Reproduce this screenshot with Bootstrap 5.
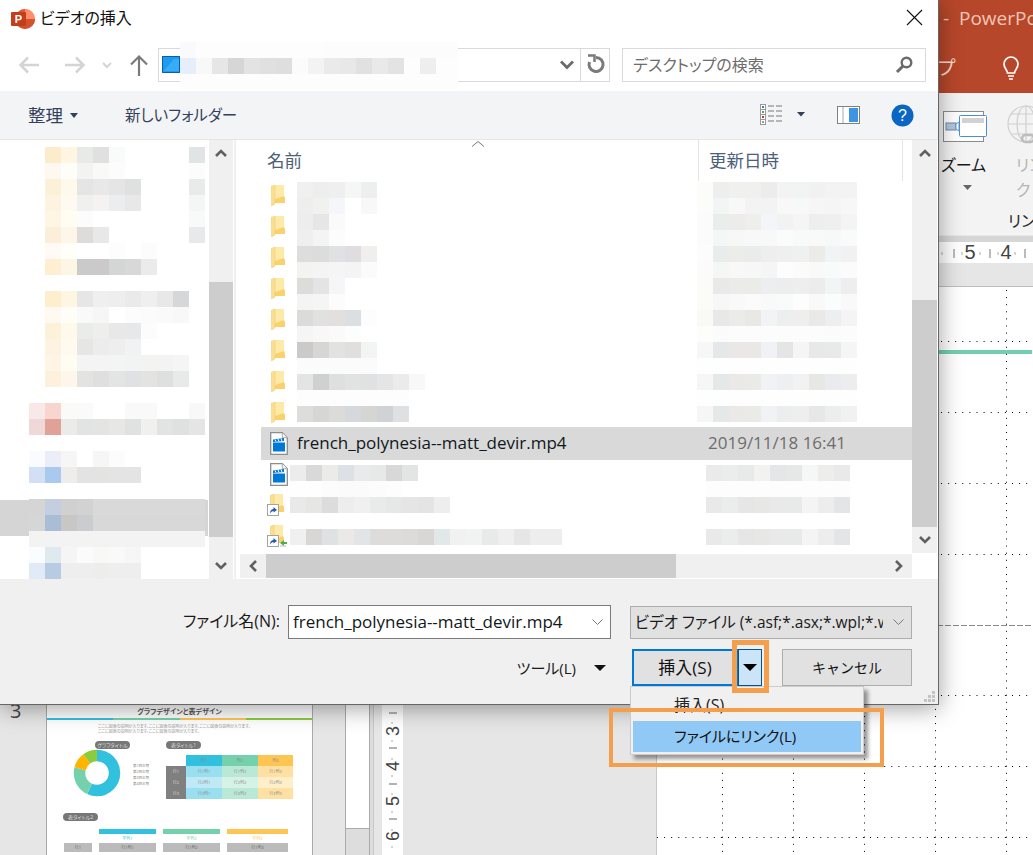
<!DOCTYPE html>
<html lang="ja">
<head>
    <meta charset="UTF-8">
    <meta name="viewport" content="width=device-width, initial-scale=1.0">
    <title>ビデオの挿入</title>
    <link rel="stylesheet" href="https://cdn.jsdelivr.net/npm/bootstrap@5.3.2/dist/css/bootstrap.min.css">
    <style>
        html, body { height: 100%; }
        body {
            width: 1033px; height: 855px; overflow: hidden; position: relative; background: #fff;
            font-family: "Open Sans", "Noto Sans CJK JP", sans-serif;
            font-feature-settings: "palt"; font-size: 16px; color: #1a1a1a; line-height: 1.2;
        }
        /* powerpoint behind the dialog */
        .pp-app { position: absolute; inset: 0; display: flex; flex-direction: column; }
        .pp-title { height: 93px; background: #b7472a; flex: none; position: relative; }
        .pp-title-text { position: absolute; left: 943px; top: 7px; color: #f2c6b7; font-size: 19px; white-space: nowrap; font-family: "Open Sans", sans-serif; }
        .pp-tab { position: absolute; left: 938px; top: 57px; color: #f7dcd3; font-size: 19px; }
        .pp-bulb { position: absolute; left: 1001px; top: 56px; }
        .pp-ribbon { height: 142px; background: #f3f3f3; flex: none; position: relative; font-size: 16px; }
        .rb-zoom-icon { position: absolute; left: 942px; top: 17px; }
        .rb-globe { position: absolute; left: 1006px; top: 12px; }
        .rb-zoom { position: absolute; left: 941px; top: 63px; }
        .rb-caret { position: absolute; left: 963px; top: 92px; }
        .rb-link { position: absolute; left: 1016px; top: 60px; color: #b5b5b5; line-height: 25px; white-space: nowrap; }
        .rb-group { position: absolute; left: 1008px; top: 119px; color: #262626; white-space: nowrap; }
        .pp-rulerline { height: 7px; background: #d6d6d6; border-top: 1px solid #e8e8e8; flex: none; }
        .pp-ruler { height: 21px; background: #fff; flex: none; }
        .pp-band { height: 24px; background: #e6e6e6; border-bottom: 1px solid #bdbdbd; flex: none; }
        .pp-work { flex: 1 1 auto; display: flex; min-height: 0; }
        .pp-pane { width: 345px; flex: none; background: #e6e6e6; padding: 417px 0 0 46px; position: relative; overflow: hidden; }
        .pp-num { position: absolute; left: 10px; top: 412px; font-size: 20px; color: #444; }
        .thumb { width: 267px; height: 160px; background: #fff; border: 1px solid #aaa; overflow: hidden; padding: 1px 0 0; }
        .thumb-title { font-size: 7px; font-weight: 700; color: #555; text-align: center; height: 12px; line-height: 12px; }
        .thumb-line { display: flex; height: 2px; }
        .thumb-line i { flex: 1; }
        .thumb-note { font-size: 4px; color: #999; line-height: 5px; padding: 4px 0 0 51px; white-space: nowrap; height: 21px; }
        .thumb-chip { background: #777; color: #ddd; font-size: 5px; border-radius: 4px; height: 8px; line-height: 8px; text-align: center; width: 35px; }
        .thumb-body { display: flex; padding-left: 24px; height: 72px; }
        .thumb-chart { width: 95px; position: relative; }
        .thumb-donut { position: absolute; left: 1px; top: 7px; }
        .thumb-legend { position: absolute; left: 62px; top: 22px; font-size: 3.5px; color: #888; line-height: 6px; white-space: nowrap; }
        .thumb-tbl { display: grid; grid-template-columns: 20px 36px 36px 35px; margin-top: 6px; font-size: 4px; color: #888; text-align: center; line-height: 11px; }
        .thumb-tbl div { height: 11px; }
        .thumb-row2 { display: grid; grid-template-columns: 28px 57px 57px 61px; column-gap: 7px; padding: 8px 0 0 17px; font-size: 4px; line-height: 9px; text-align: center; color: #888; }
        .thumb-bar { height: 5px; }
        .c-a { background: #31c0de; } .c-b { background: #74d1ac; } .c-c { background: #ffc552; } .c-d { background: #8ccb3c; }
        .c-a1 { background: #9adff0; } .c-b1 { background: #b9e9d6; } .c-c1 { background: #ffe0a3; }
        .c-a2 { background: #bfeaf5; } .c-b2 { background: #d6f1e6; } .c-c2 { background: #ffefc9; }
        .c-g { background: #808080; color: #ddd; } .c-s { background: #bbb; color: #666; }
        .t-a { color: #31c0de; } .t-b { color: #74d1ac; } .t-c { color: #ffc552; }
        .pp-vsb { width: 25px; flex: none; background: #ddd; border-left: 1px solid #aaa; border-right: 1px solid #aaa; padding-top: 0; position: relative; }
        .pp-vsb-thumb { height: 542px; background: #fff; border-bottom: 1px solid #aaa; }
        .pp-gap { width: 4px; flex: none; background: #ddd; border-right: 1px solid #c8c8c8; }
        .pp-gap2 { width: 8px; flex: none; background: #e6e6e6; }
        .pp-vruler { width: 21px; flex: none; background: #fff; }
        .pp-gray { width: 254px; flex: none; background: #e6e6e6; border-right: 1px solid #c8c8c8; }
        .pp-slide { flex: 1 1 auto; background: #fff; }

        /* dialog */
        .win { position: absolute; left: 0; top: 0; width: 939px; height: 705px; background: #fff; display: flex; flex-direction: column;
            border-right: 1px solid #666; border-bottom: 1px solid #666; box-shadow: 0 3px 22px rgba(0,0,0,.38); }
        .win-title { height: 38px; flex: none; padding-left: 11px; position: relative; }
        .win-title span { margin-left: 5px; color: #111; }
        .win-close { position: absolute; left: 906px; top: 9px; }
        .addr-row { height: 53px; flex: none; padding-top: 10px; position: relative; }
        .nav-icons { width: 158px; height: 34px; flex: none; padding-left: 19px; }
        .addr-box { width: 452px; height: 34px; flex: none; border: 1px solid #d9d9d9; background: #fff; }
        .addr-blue { margin: 7px 0 0 3px; }
        .addr-chev { margin: 11px 0 0 auto; }
        .addr-refresh { width: 29px; height: 32px; border-left: 1px solid #d9d9d9; padding: 4px 0 0 5px; margin-left: 6px; }
        .search-box { width: 304px; height: 34px; flex: none; margin-left: 12px; border: 1px solid #d9d9d9; padding: 0 0 0 10px; color: #6d6d6d; line-height: 32px; }
        .search-box svg { margin: 7px 12px 0 auto; }
        .addr-blur { position: absolute; left: 180px; top: 4px; width: 278px; overflow: hidden; }
        .tool-row { height: 49px; flex: none; background: #f3f4f6; border-bottom: 1px solid #e5e5e5; color: #33415a; padding-left: 28px; }
        .tool-org { font-size: 17.5px; }
        .tool-new { margin-left: 47px; font-size: 15.5px; }
        .tool-caret { margin-left: 7px; }
        .tool-right { margin-left: auto; margin-right: 24px; }
        .tool-pane { margin: 0 31px 0 17px; }
        .main-area { height: 439px; flex: none; display: flex; overflow: hidden; }
        .tree-pane { width: 209px; flex: none; position: relative; padding: 7px 0 0 29px; overflow: hidden; }
        .tree-sel { position: absolute; left: 0; top: 360px; width: 208px; height: 36px; background: #d5d5d5; }
        .tree-pane .mos { position: relative; }
        .sb { width: 24px; flex: none; background: #f0f0f0; display: flex; flex-direction: column; }
        .sb-btn { height: 26px; flex: none; display: flex; align-items: center; justify-content: center; }
        .sb-track { flex: none; }
        .sb-thumb { background: #cdcdcd; flex: none; }
        .tr-t1 { height: 116px; } .tr-th { height: 255px; } .tr-t2 { height: 16px; }
        .ls-t1 { height: 134px; } .ls-th { height: 227px; }
        .sb-v2 { width: 25px; margin-left: 0; background: #f0f0f0; }
        .sb-corner { height: 26px; background: #fff; flex: none; }
        .pane-div { width: 7px; flex: none; background: #fff; padding-left: 1px; }
        .pane-div i { display: block; width: 2px; height: 100%; background: #efefef; }
        .list-pane { width: 672px; flex: none; display: flex; flex-direction: column; }
        .list-head { height: 42px; flex: none; color: #4c607a; position: relative; font-size: 17.5px; }
        .lh-name { position: absolute; left: 27px; top: 10px; }
        .lh-date { position: absolute; left: 458px; top: 0; width: 205px; height: 41px; border-left: 1px solid #e5e5e5; border-right: 1px solid #e5e5e5; padding: 10px 0 0 10px; }
        .lh-sort { position: absolute; left: 231px; top: 0; }
        .list-g1 { height: 245px; flex: none; display: flex; }
        .icon-col1 { width: 57px; flex: none; padding: 3px 0 0 31px; display: flex; flex-direction: column; gap: 10px; }
        .name-col1 { width: 400px; flex: none; }
        .list-sel { height: 33px; flex: none; margin-left: 21px; background: #d9d9d9; display: flex; align-items: center; padding-left: 9px; }
        .list-sel .fname { margin-left: 9px; width: 411px; font-size: 17px; color: #101820; }
        .list-sel .fdate { color: #6d6d6d; font-size: 17px; }
        .list-g2 { height: 94px; flex: none; display: flex; }
        .icon-col2 { width: 50px; flex: none; padding: 3px 0 0 27px; }
        .ico-wrap { position: relative; width: 22px; height: 22px; margin-bottom: 9px; }
        .ico-wrap .ico-main { position: absolute; left: 3px; top: 0; }
        .ico-wrap .ico-over { position: absolute; left: 0; top: 10px; }
        .ico-wrap .ico-net { position: absolute; left: 13px; top: 14px; }
        .name-col2 { width: 416px; flex: none; padding-top: 5px; }
        .date-col2 { padding-top: 5px; }
        .hsb { height: 24px; flex: none; background: #f0f0f0; display: flex; }
        .hsb-btn { width: 26px; display: flex; align-items: center; justify-content: center; flex: none; }
        .hsb-thumb { width: 410px; background: #cdcdcd; flex: none; }
        .hsb-btn.end { margin-left: auto; }
        .mos-row { display: flex; height: 16px; }
        .mos-cell { width: 16px; flex: none; }
        .win-foot { flex: 1 1 auto; background: #f0f0f0; padding: 26px 26px 0 0; position: relative; }
        .foot-row { display: flex; justify-content: flex-end; align-items: center; }
        .foot-row2 { margin-top: 10px; }
        .fname-input { width: 323px; height: 34px; border: 1px solid #7a7a7a; background: #fff; margin-left: 8px; padding: 0 7px 0 4px; font-size: 17px; color: #101820; }
        .ftype { width: 282px; height: 33px; margin-left: 19px; background: #e1e1e1; border: 1px solid #adadad; padding: 0 7px 0 4px; white-space: nowrap; overflow: hidden; font-size: 15.5px; }
        .ftype span { width: 248px; overflow: hidden; flex: none; }
        .win-btn { height: 37px; border-radius: 0; background: #e1e1e1; border: 1px solid #adadad; font-size: 15px; padding: 0; color: #111; }
        .btn-insert { width: 106px; border: 2px solid #0078d7; font-size: 17px; }
        .btn-insert:hover { background: #e1e1e1; border-color: #0078d7; }
        .btn-arrow { width: 24px; background: #cce4f7; border: 1px solid #005499; border-left-width: 1px; display: flex; align-items: center; justify-content: center; }
        .btn-cancel { width: 130px; margin-left: 20px; font-size: 14px; }
        .tool-btn { margin-right: 26px; font-size: 15px; }
        .tool-btn svg { margin-left: 18px; }
        .grip { position: absolute; right: 2px; bottom: 1px; }
        .ins-menu.dropdown-menu { display: block; position: absolute; left: 630px; top: 686px; width: 234px; height: 69px; min-width: 0; margin: 0; padding: 2px 2px; border: 1px solid #ccc; border-radius: 0;
            background: #f0f0f0; box-shadow: 4px 4px 4px rgba(0,0,0,.4); font-size: 15px; }
        .ins-menu .dropdown-item { padding: 0 0 0 41px; height: 31px; line-height: 31px; color: #111; }
        .ins-menu .first { color: #222; height: 31px; margin-top: 1px; font-size: 16px; }
        .ins-menu .dropdown-item.active { background: #90c8f6; color: #111; }
        .mark-a, .mark-b { position: absolute; border: 5px solid #f49f4d; pointer-events: none; z-index: 1001; }
        .mark-a { left: 732px; top: 640px; width: 37px; height: 53px; }
        .mark-b { left: 609px; top: 708px; width: 275px; height: 59px; border-width: 4px; }
    </style>
</head>
<body>
    <!-- PowerPoint window behind -->
    <div class="pp-app">
        <div class="pp-title">
            <div class="pp-title-text">-&nbsp;&nbsp;PowerPoint</div>
            <div class="pp-tab">プ</div>
            <svg class="pp-bulb" width="20" height="24" viewBox="0 0 20 24" fill="none" stroke="#fff" stroke-width="1.7">
                <path d="M6.500 17c0-3-3.500-4.500-3.500-9a7 7 0 0 1 14 0c0 4.500-3.500 6-3.500 9z"/><path d="M7 20h6M8 23h4"/>
            </svg>
        </div>
        <div class="pp-ribbon">
            <svg class="rb-zoom-icon" width="46" height="34" viewBox="0 0 46 34">
                <rect x="1.500" y="1.500" width="40" height="30" fill="#fff" stroke="#8c8c8c"/>
                <rect x="4" y="13" width="10" height="7" fill="#b3c6dc" stroke="#6e88a8"/>
                <path d="M14 14l3-2v9l-3-2z" fill="#fff" stroke="#5b9bd5"/>
                <rect x="17.500" y="5.500" width="27" height="21" rx="1" fill="#fff" stroke="#4a90d0"/>
                <rect x="20" y="8" width="22" height="5" fill="#d2d2d2"/>
            </svg>
            <svg class="rb-globe" width="27" height="40" viewBox="0 0 27 40" fill="none" stroke="#d0d0d0" stroke-width="1.200">
                <circle cx="20" cy="19" r="18"/><ellipse cx="20" cy="19" rx="9" ry="18"/><path d="M20 1v36M2 19h36M5 9h30M5 29h30"/>
                <rect x="16" y="30" width="12" height="7" rx="3.500" stroke="#bdbdbd" stroke-width="2.500"/>
            </svg>
            <div class="rb-zoom">ズーム</div>
            <svg class="rb-caret" width="9" height="5"><path d="M0 0h9L4.500 5z" fill="#666"/></svg>
            <div class="rb-link">リン<br>ク</div>
            <div class="rb-group">リン</div>
        </div>
        <div class="pp-rulerline"></div>
        <div class="pp-ruler">
            <svg width="1033" height="21" viewBox="0 242 1033 21">
                <g stroke="#777"><path d="M954 249v9M990 249v9M1025 249v9"/></g>
                <g stroke="#aaa"><path d="M942 252v3M962 252v3M980 252v3M998 252v3M1015 252v3"/></g>
                <text x="970" y="259" text-anchor="middle" font-size="20" fill="#444" font-family="Liberation Sans">5</text>
                <text x="1006" y="259" text-anchor="middle" font-size="20" fill="#444" font-family="Liberation Sans">4</text>
            </svg>
        </div>
        <div class="pp-band"></div>
        <div class="pp-work">
            <div class="pp-pane">
                <div class="pp-num">3</div>
                <div class="thumb">
                    <div class="thumb-title">グラフデザインと表デザイン</div>
                    <div class="thumb-line"><i class="c-a"></i><i class="c-b"></i><i class="c-c"></i><i class="c-d"></i></div>
                    <div class="thumb-note">ここに図表の説明が入ります。ここに図表の説明が入ります。ここに図表の説明が入ります。<br>ここに図表の説明が入ります。ここに図表の説明が入ります。</div>
                    <div class="thumb-body">
                        <div class="thumb-chart">
                            <div class="thumb-chip ms-4">グラフタイトル</div>
                            <svg class="thumb-donut" width="50" height="50" viewBox="0 0 50 50" fill="none" stroke-width="11.500">
                                <g transform="rotate(-90 25 25)">
                                    <circle cx="25" cy="25" r="17.500" stroke="#31c0de" pathLength="100" stroke-dasharray="57 43"/>
                                    <circle cx="25" cy="25" r="17.500" stroke="#74d1ac" pathLength="100" stroke-dasharray="22 78" stroke-dashoffset="-57"/>
                                    <circle cx="25" cy="25" r="17.500" stroke="#ffb400" pathLength="100" stroke-dasharray="11 89" stroke-dashoffset="-79"/>
                                    <circle cx="25" cy="25" r="17.500" stroke="#8ccb3c" pathLength="100" stroke-dasharray="10 90" stroke-dashoffset="-90"/>
                                </g>
                            </svg>
                            <div class="thumb-legend">第1四半期<br>第2四半期<br>第3四半期<br>第4四半期</div>
                        </div>
                        <div>
                            <div class="thumb-chip">表タイトル1</div>
                            <div class="thumb-tbl">
                                <div></div><div class="c-a">列1</div><div class="c-b">列2</div><div class="c-c">列3</div>
                                <div class="c-g">行1</div><div class="c-a1">行1列1</div><div class="c-b1">行1列2</div><div class="c-c1">行1列3</div>
                                <div class="c-g">行2</div><div class="c-a2">行2列1</div><div class="c-b2">行2列2</div><div class="c-c2">行2列3</div>
                                <div class="c-g">行3</div><div class="c-a1">行3列1</div><div class="c-b1">行3列2</div><div class="c-c1">行3列3</div>
                            </div>
                        </div>
                    </div>
                    <div class="thumb-chip ms-3">表タイトル2</div>
                    <div class="thumb-row2">
                        <div></div><div class="c-a thumb-bar"></div><div class="c-b thumb-bar"></div><div class="c-c thumb-bar"></div>
                        <div></div><div class="t-a">平列1</div><div class="t-b">平列2</div><div class="t-c">平列3</div>
                        <div class="c-s">行1</div><div class="c-s">行1列1</div><div class="c-s">行1列2</div><div class="c-s">行1列3</div>
                    </div>
                </div>
            </div>
            <div class="pp-vsb"><div class="pp-vsb-thumb"></div></div>
            <div class="pp-gap"></div>
            <div class="pp-gap2"></div>
            <div class="pp-vruler">
                <svg width="21" height="568" viewBox="382 287 21 568">
                    <g stroke="#666"><path d="M389 713h8M389 748h8M389 784h8M389 819h8"/></g>
                    <g stroke="#aaa"><path d="M392 696v2M392 722v2M392 740v2M392 758v2M392 775v2M392 793v2M392 811v2M392 829v2M392 846v2"/></g>
                    <g font-size="18" fill="#444" font-family="Liberation Sans" text-anchor="middle">
                        <text transform="translate(399 731) rotate(-90)">3</text>
                        <text transform="translate(399 766) rotate(-90)">4</text>
                        <text transform="translate(399 801) rotate(-90)">5</text>
                        <text transform="translate(399 836) rotate(-90)">6</text>
                    </g>
                </svg>
            </div>
            <div class="pp-gray"></div>
            <div class="pp-slide">
                <svg width="375" height="568" viewBox="658 287 375 568">
                    <g stroke="#000" stroke-dasharray="1 6.100">
                        <path d="M658 341.500H1033M658 412.500H1033M658 483.500H1033M658 554.500H1033M658 695.500H1033M658 766.500H1033M658 837.500H1033"/>
                        <path d="M723.500 290V855M794.500 290V855M865.500 290V855M936.500 290V855M1007.500 290V855"/>
                    </g>
                    <path d="M658 625.500H1033" stroke="#888" stroke-dasharray="6 2"/>
                    <rect x="658" y="350" width="375" height="4" fill="#72cfae"/>
                </svg>
            </div>
        </div>
    </div>

    <!-- dialog -->
    <div class="win">
        <div class="win-title d-flex align-items-center">
            <svg width="24" height="24" viewBox="0 0 24 24">
                <circle cx="14" cy="12" r="10" fill="#ed6c47"/>
                <path d="M14 2a10 10 0 0 1 10 10H14z" fill="#ff8f6b"/>
                <path d="M14 2a10 10 0 0 0-10 10h10z" fill="#e0593a"/>
                <path d="M4 12a10 10 0 0 0 10 10 10 10 0 0 0 10-10z" fill="#d35230"/>
                <rect y="5" width="15" height="14" rx="1" fill="#c43e1c"/>
                <text x="7.500" y="16" text-anchor="middle" font-size="11" font-weight="700" fill="#fff" font-family="Liberation Sans">P</text>
            </svg>
            <span>ビデオの挿入</span>
            <svg class="win-close" width="17" height="17" viewBox="0 0 17 17" stroke="#111" stroke-width="1.100"><path d="M1 1l15 15M16 1L1 16"/></svg>
        </div>
        <div class="addr-row d-flex">
            <div class="nav-icons">
                <svg width="130" height="34" viewBox="0 0 130 34" fill="none">
                    <path d="M20 17H2M9 9.500l-7.500 7.500L9 24.500" stroke="#d4d4d4" stroke-width="2.500"/>
                    <path d="M46 17h18M57 9.500l7.500 7.500L57 24.500" stroke="#d4d4d4" stroke-width="2.500"/>
                    <path d="M84 15l4 4 4-4" stroke="#d4d4d4" stroke-width="2"/>
                    <path d="M120 28V9M112 16.500l8-8 8 8" stroke="#7a7a7a" stroke-width="2.200"/>
                </svg>
            </div>
            <div class="addr-box d-flex">
                <svg class="addr-blue" width="18" height="17" viewBox="0 0 18 17"><rect width="18" height="17" fill="#1e9bf0"/><path d="M0 17L12 3h6v12H0z" fill="#36aef7"/><path d="M.5.500h17v16H.5z" fill="none" stroke="#0b5ea8"/></svg>
                <svg class="addr-chev" width="14" height="10" viewBox="0 0 14 10" fill="none" stroke="#6b6b6b" stroke-width="2.800"><path d="M1 1.500l6 6 6-6"/></svg>
                <div class="addr-refresh">
                    <svg width="20" height="22" viewBox="0 0 20 22" fill="none" stroke="#7a7a7a" stroke-width="3"><path d="M10 4.500a7 7 0 1 1-6.500 4.500"/><path d="M2 2.500h6.500V9" stroke-width="2.500"/></svg>
                </div>
            </div>
            <div class="search-box d-flex">
                <span>デスクトップの検索</span>
                <svg width="18" height="18" viewBox="0 0 18 18" fill="none" stroke="#6b6b6b"><circle cx="11.500" cy="6.500" r="4.800" stroke-width="2.400"/><path d="M8 10l-6 6" stroke-width="3"/></svg>
            </div>
            <div class="addr-blur mos" data-rows="f9fafd fdfdfd fdfdfd fdfdfd fdfdfd fdfdfd fdfdfd fdfdfd fdfdfd fcfcfc fcfcfc fcfcfc fcfcfc fcfcfc fcfcfc fcfcfc fcfcfc fcfcfc|e6edfb f8f8f8 e6e6e6 d6d6d6 e3e3e3 e0e0e0 dedede fbfbfb f3f3f3 eaeaea e8e8e8 e1e1e1 e9e9e9 e3e3e3 fdfdfd eeeeee fdfdfd fdfdfd|fdfdfd fdfdfd fdfdfd fdfdfd fdfdfd fdfdfd fdfdfd fdfdfd fdfdfd fdfdfd fdfdfd fdfdfd fdfdfd fdfdfd fdfdfd fdfdfd fdfdfd fdfdfd"></div>
        </div>
        <div class="tool-row d-flex align-items-center">
            <span class="tool-org">整理</span>
            <svg class="tool-caret" width="8" height="5"><path d="M0 0h8L4 5z" fill="#33415a"/></svg>
            <span class="tool-new">新しいフォルダー</span>
            <div class="tool-right d-flex align-items-center">
                <svg width="60" height="22" viewBox="0 0 60 22">
                    <g fill="#fff" stroke="#999"><rect x=".5" y=".5" width="5" height="5"/><rect x=".5" y="5.500" width="5" height="5"/><rect x=".5" y="10.500" width="5" height="5"/><rect x=".5" y="15.500" width="5" height="5"/></g>
                    <rect x="2" y="2" width="2" height="2" fill="#2a8a9c"/><rect x="2" y="7" width="2" height="2" fill="#6a9a4a"/><rect x="2" y="12" width="2" height="2" fill="#c0392b"/><rect x="2" y="17" width="2" height="2" fill="#999"/>
                    <path d="M8 2h6M16 2h6M8 7h6M16 7h6M8 12h6M16 12h6M8 17h6M16 17h6" stroke="#777"/>
                    <path d="M37 8h8l-4 4.500z" fill="#33415a"/>
                </svg>
                <svg class="tool-pane" width="23" height="18" viewBox="0 0 23 18"><rect x=".5" y=".5" width="22" height="17" fill="#fff" stroke="#808080"/><rect x="12" y="2" width="9" height="14" fill="#3d94e3"/><path d="M6 1v16" stroke="#aaa"/></svg>
                <svg width="23" height="23" viewBox="0 0 23 23"><circle cx="11.500" cy="11.500" r="11" fill="#0a66c2"/><text x="11.500" y="17" text-anchor="middle" font-size="16" fill="#fff" font-family="Liberation Sans">?</text></svg>
            </div>
        </div>
        <div class="main-area">
            <div class="tree-pane">
                <div class="tree-sel"></div>
                <div class="mos" data-rows="- fdeccc fef5e3 e8eae8 e0e0e0 f9fbfa - - - - e0e4e4|- fef8f0 fffdf8 f3f3f3 f9f9f8 fcfcfc - - - - fcfcfc|- fdf0d9 fef9eb e6e5e5 e8e8e8 e5e5e5 dfe0e0 - - - e9ebeb|- fdf3e0 fef9f1 f0f0ef f4f3f2 ecedef e8e8e8 - - - f4f6f6|- fef5e5 fffcf3 fcfcfc - - - - - - f8fafa|- fcefd9 fef6e9 dddcdb e8e8e8 - - - - - e8e9eb|- fffaf5 fffef9 - - fdfdfd - fcfcfc - - -|- fdefcf fef6e4 cacaca cbc9ca d4d6d6 d8d8d8 ebebeb - - -|-|- fdeece fef5e3 e6e6e6 efefef eeeeee eaeaea efefef e8e8e8 d6d7d8 -|- fff9f1 fffdf8 f9f9f9 f6f6f6 - fcfcfc fbfbfb fafafa f8f8f8 -|- fef1da fff9eb e9ece9 eeeeed e9e8e9 e6e8ea fcfcfc - - -|- fef3e2 fff9f0 e6e6e5 ececec eeeeee f0f2f4 - - - -|- fff5e7 fffcf2 f4f4f4 f4f4f4 f3f4f4 f2f3f3 f3f3f2 f3f3f3 f5f5f5 -|- fdf0dc fef6ea e3e3e2 dfdfdf e4e4e4 e0e1e3 e3e3e1 dde0df e8eaea -|-|f8e8e8 f9d5d0 fafaf9 fafafa - - f9f9f9 f9f9f9 - - f8f8f8|f0d8d8 e0a296 ebebea e2e3e3 e4e4e3 e7e7e6 e0e2e2 f0f0ee e2e3e3 dfe1e0 e5e5e5|-|fafbff ebeef8 f6f6f6 - f6f6f6 fcfcfc|d2dff5 a9c9ef eeedeb e3e3e3 e3e3e2 e4e4e4 e4e4e4|-|d5d5d5 c3cfdf d0d0d0 d2d2d2 d9d9d9 d9d9d9 d9d9d9 d9d9d9 d9d9d9 d9d9d9 d9d9d9|d5d7d7 a9bdd6 c9c7c5 cbccd0 d8d8d8 d8d8d8 d8d8d8 d8d8d8 d8d8d8 d8d8d8 d8d8d8|f3f3f3 f3f3f3 f3f3f3 f3f3f3 f3f3f3 f3f3f3 f3f3f3 f3f3f3 f3f3f3 f3f3f3 f3f3f3|fafcff dfe9f0 f5f5f5 fbfbfb f8f8f7 f9f9f9 f6f6f6|e0ebf7 b7cbe3 eeeeee eeeeee ededec eeeeee eeeeee"></div>
            </div>
            <div class="sb">
                <div class="sb-btn"><svg width="12" height="8" viewBox="0 0 12 8" fill="none" stroke="#606060" stroke-width="2.600"><path d="M1 7l5-5 5 5"/></svg></div>
                <div class="sb-track tr-t1"></div>
                <div class="sb-thumb tr-th"></div>
                <div class="sb-track tr-t2"></div>
                <div class="sb-btn"><svg width="12" height="8" viewBox="0 0 12 8" fill="none" stroke="#606060" stroke-width="2.600"><path d="M1 1l5 5 5-5"/></svg></div>
            </div>
            <div class="pane-div"><i></i></div>
            <div class="list-pane">
                <div class="list-head">
                    <span class="lh-name">名前</span>
                    <svg class="lh-sort" width="14" height="8" viewBox="0 0 14 8" fill="none" stroke="#777"><path d="M1 6.500l6-5 6 5"/></svg>
                    <div class="lh-date">更新日時</div>
                </div>
                <div class="list-g1">
                    <div class="icon-col1" id="folders"></div>
                    <div class="name-col1 mos" data-rows="f0f0f0 eeeeee efefef f6f6f6 edeeee|eeeeee f1f1ef f5f6f9 ffffff f8f8f8|ededed e6e6e6 fafafa|efefef f4f4f4 fcfcfc|dddddd dcdcdc e0e1e3 dfdddf eff0ee|f3f3f2 f4f4f4 f5f5f5 f4f4f5 fbfbfb|dcdcdb e4e4e4 f6f6f8|f4f4f4 f5f5f5 fcfcfc|dbdbda e2e1e2 e3dfdf dcdfe2 fdfdfd|f5f5f5 f8f8f8 fafafa fcfdfd|cbc9ca d6d6d5 e2e2e2 e0dfdd f3f5f4|fbfbfb fbfbfb fbfbfb fbfbfb fbfbfb|e4e4e4 cfd1d1 dfdfdf e1e3e3 e0e1e3 e5e5e6 ebebeb f8f8f8|fdfdfd fdfdfd fdfdfd fdfdfd fdfdfd fdfdfd fdfdfd|dddddc d6d6d5 dbdbda d5d9dd d5d5d4 cfd3d5 dfe0e2"></div>
                    <div class="mos" data-rows="fcfcfa eeeeee f0f0ee f0f0ee ececec f3f3f3 f2f3f3 f1f1f1 f3f3f3 f3f3f3|fcfcfa f3f4f4 f8f8f8 f3f3f3 f3f3f3 f8f8f8 f7f8f8 f6f6f6 f5f5f5 f7f7f7|fbfbfb ebeded eeecea eeeeec f3f5f8 f2f2f2 f5f5f5 eeeeee efefef f4f4f4|fbfbfb f5f6f6 f7f7f7 f8f8f8 f8f8f8 fafbfb f8f9f9 f9f9f9 f7f8f8 f9fafa|fcfcfc eaecec ecece9 eaecec eeeeee efefef eff1f0 ebebe8 f2f3f5 f1f1f1|fbfbfb f5f6f6 f8f8f8 f7f7f7 f5f5f5 fcfdfc fbfbfb f9f9f9 f9fafa fbfbfb|fbfbf9 e9e9e9 ebebe9 ebebe8 eceef0 ededed eeeeee ececec f3f4f6 eeeeee|fbfbf9 f7f7f7 f9f9f9 fbfbfb f9f9f9 f9fafa fdfdfd f9f9f9 fbfcfc f9f9f9|f9f9f7 e8e8e8 ebebe9 e9e8e5 f1f3f5 edefef eeeeee ebe9e7 eceef0 f4f4f4|fdfdfb fbfbfb fcfcfc fcfcfc fcfcfc fcfcfc fcfcfc fcfcfc fbfbfb fcfcfc|f7f7f7 e4e8e8 e9e8e6 e9e8e6 f1f2f5 e5e5e5 f5f5f5 e8e8e8 e8eaea f5f5f5|fefefe fefefe fefefe fefefe fefefe fefefe fefefe fefefe fefefe fefefe|f6f6f6 e4e8e8 ebe9e7 eaeae7 f1f2f4 eeeff1 f2f2f2 e7e7e4 e9ebee ededed|fefefe fefefe fefefe fefefe fefefe fefefe fefefe fefefe fefefe fefefe|f6f6f6 e4e8e8 ebe9e7 eaeae7 f1f2f4 eceeee eeeeee e7e7e7 eceeee f1f1f1"></div>
                </div>
                <div class="list-sel">
                    <svg class="vid-ico" width="18" height="23" viewBox="0 0 18 23"><use href="#vid"/></svg>
                    <span class="fname">french_polynesia--matt_devir.mp4</span>
                    <span class="fdate">2019/11/18 16:41</span>
                </div>
                <div class="list-g2">
                    <div class="icon-col2">
                        <div class="ico-wrap"><svg class="ico-main" width="18" height="23" viewBox="0 0 18 23"><use href="#vid"/></svg></div>
                        <div class="ico-wrap">
                            <svg class="ico-main" width="14" height="21" viewBox="0 0 14 21"><use href="#fold"/></svg>
                            <svg class="ico-over" width="12" height="12" viewBox="0 0 12 12"><use href="#short"/></svg>
                        </div>
                        <div class="ico-wrap">
                            <svg class="ico-main" width="14" height="21" viewBox="0 0 14 21"><use href="#fold"/></svg>
                            <svg class="ico-over" width="12" height="12" viewBox="0 0 12 12"><use href="#short"/></svg>
                            <svg class="ico-net" width="7" height="8" viewBox="0 0 7 8"><path d="M0 4l4-3v2h3v2H4v2z" fill="#4caf50"/><path d="M0 7h6" stroke="#bbb"/></svg>
                        </div>
                    </div>
                    <div class="name-col2 mos" data-rows="ececec d9d9d9 ebebea dde1e5 e8eaeb e7e9e8 d8d8d8 e3e5e5|fefefe fefefe fcfcfc fbfbfb fbfbfb fcfcfc fdfdfd|e9e9e9 e6e6e5 dcdcdc ededed f0f0f0 e9eaea e6e8e8 e5e5e5 e4e4e4 eeeeee|-|f0f0f0 d8d7d6 dfe2e2 ebe9e8 e2e5e8 dddcda dddcda dcdbd9 d8d7d5 e2e7e9 f1f1f1 f1f2f2 e8eaea efefef e6e6e6 ededed ededed"></div>
                    <div class="date-col2 mos" data-rows="eaeaea ebecec e8e9e9 f2f3f1 e5e6e8 e6e8e8 f5f6f6 ededec e9e9e9|fdfdfd fdfdfd fdfdfd fdfdfd fdfdfd fdfdfd fdfdfd fdfdfd fdfdfd|e9e9e9 ebecec e6e6e6 e7e7e6 e9e9e9 e8eaea f4f4f4 ecedec e4e5e7|-|e9e9e9 ebecec e6e6e6 e7e7e6 e9e9e9 e8eaea f4f4f4 ecedec e4e5e7"></div>
                </div>
                <div class="hsb">
                    <div class="hsb-btn"><svg width="8" height="12" viewBox="0 0 8 12" fill="none" stroke="#606060" stroke-width="2.600"><path d="M7 1L2 6l5 5"/></svg></div>
                    <div class="hsb-thumb"></div>
                    <div class="hsb-btn end"><svg width="8" height="12" viewBox="0 0 8 12" fill="none" stroke="#606060" stroke-width="2.600"><path d="M1 1l5 5-5 5"/></svg></div>
                </div>
            </div>
            <div class="sb sb-v2">
                <div class="sb-btn"><svg width="12" height="8" viewBox="0 0 12 8" fill="none" stroke="#606060" stroke-width="2.600"><path d="M1 7l5-5 5 5"/></svg></div>
                <div class="sb-track ls-t1"></div>
                <div class="sb-thumb ls-th"></div>
                <div class="sb-btn"><svg width="12" height="8" viewBox="0 0 12 8" fill="none" stroke="#606060" stroke-width="2.600"><path d="M1 1l5 5 5-5"/></svg></div>
                <div class="sb-corner"></div>
            </div>
        </div>
        <div class="win-foot">
            <div class="foot-row">
                <span>ファイル名(N):</span>
                <div class="fname-input d-flex align-items-center justify-content-between">
                    <span>french_polynesia--matt_devir.mp4</span>
                    <svg width="11" height="6" viewBox="0 0 11 6" fill="none" stroke="#777"><path d="M.5.500l5 5 5-5"/></svg>
                </div>
                <div class="ftype d-flex align-items-center justify-content-between">
                    <span>ビデオ ファイル (*.asf;*.asx;*.wpl;*.wm;*.wmx)</span>
                    <svg width="11" height="6" viewBox="0 0 11 6" fill="none" stroke="#777"><path d="M.5.500l5 5 5-5"/></svg>
                </div>
            </div>
            <div class="foot-row foot-row2">
                <div class="tool-btn d-flex align-items-center">
                    <span>ツール(L)</span>
                    <svg width="12" height="6"><path d="M0 0h12L6 6z" fill="#111"/></svg>
                </div>
                <div class="d-flex">
                    <button type="button" class="btn win-btn btn-insert">挿入(S)</button>
                    <div class="win-btn btn-arrow"><svg width="14" height="7"><path d="M0 0h14L7 7z" fill="#000"/></svg></div>
                </div>
                <button type="button" class="btn win-btn btn-cancel">キャンセル</button>
            </div>
            <svg class="grip" width="12" height="12" viewBox="0 0 12 12" fill="#c4c4c4"><rect x="8" width="3" height="3"/><rect x="4" y="4" width="3" height="3"/><rect x="8" y="4" width="3" height="3"/><rect y="8" width="3" height="3"/><rect x="4" y="8" width="3" height="3"/><rect x="8" y="8" width="3" height="3"/></svg>
        </div>
    </div>

    <!-- insert menu and the orange marks over it -->
    <div class="dropdown-menu ins-menu">
        <div class="dropdown-item first">挿入(S)</div>
        <div class="dropdown-item active">ファイルにリンク(L)</div>
    </div>
    <div class="mark-a"></div>
    <div class="mark-b"></div>

    <svg width="0" height="0" class="position-absolute">
        <defs>
            <g id="fold">
                <path d="M4 0h9v18H4z" fill="#fde9a8"/>
                <path d="M4 14l9-3 1 2v5H4z" fill="#f9d26e"/>
                <path d="M0 1.500L4 0v19l-3.500 2z" fill="#fbdf8e" stroke="#e8c265" stroke-width=".4"/>
            </g>
            <g id="vid">
                <path d="M.7.700h11.600l5 5v16.600H.7z" fill="#fff" stroke="#8d8d8d" stroke-width="1.300"/>
                <path d="M12.300.700v5h5" fill="#f3f3f3" stroke="#aaa"/>
                <rect x="3" y="10.500" width="12" height="9" fill="#0078d7"/>
                <path d="M3 7.500l11-1.500v3l-11 1z" fill="#0078d7"/>
                <path d="M5 7.500l1 2M8 7l1 2.400M11 6.700l1 2.400" stroke="#fff"/>
            </g>
            <g id="short">
                <rect x=".5" y=".5" width="11" height="11" fill="#fff" stroke="#a5a5a5"/>
                <path d="M3 9.500c0-3 1.500-4.500 3.500-4.500V3L10 6 6.500 8.500V7C5 7 4 8 3 9.500z" fill="#2a5aa8"/>
            </g>
        </defs>
    </svg>

    <script>
        // pixelated (blurred out) names
        document.querySelectorAll('.mos').forEach(box => {
            box.innerHTML = box.dataset.rows.split('|').map(row => {
                const cells = row.split(' ').map(c =>
                    c === '-' ? '<div class="mos-cell"></div>' : `<div class="mos-cell" style="background:#${c}"></div>`
                ).join('');
                return `<div class="mos-row">${cells}</div>`;
            }).join('');
        });

        // folder icons of the first rows
        document.getElementById('folders').innerHTML = Array(8).fill(
            '<svg width="14" height="21" viewBox="0 0 14 21"><use href="#fold"/></svg>'
        ).join('');
    </script>
    <script src="https://cdn.jsdelivr.net/npm/bootstrap@5.3.2/dist/js/bootstrap.bundle.min.js"></script>
</body>
</html>
